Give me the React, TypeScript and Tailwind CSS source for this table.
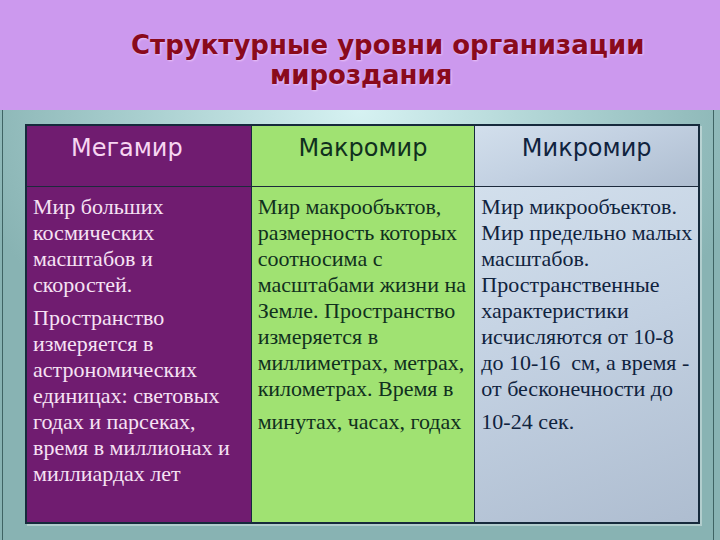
const columns = [
  {
    title: "Мегамир",
    cell: "bg-[#701c70] text-[#f6e2f4]",
    head: "text-[#f7d6f2] pr-6",
    paragraphs: [
      ["Мир больших", "космических", "масштабов и", "скоростей."],
      [
        "Пространство",
        "измеряется в",
        "астрономических",
        "единицах: световых",
        "годах и парсеках,",
        "время в миллионах и",
        "миллиардах лет",
      ],
    ],
  },
  {
    title: "Макромир",
    cell: "bg-[#a0e272] text-[#10301e]",
    head: "text-[#0f3028]",
    paragraphs: [
      [
        "Мир макрообъктов,",
        "размерность которых",
        "соотносима с",
        "масштабами жизни на",
        "Земле. Пространство",
        "измеряется в",
        "миллиметрах, метрах,",
        "километрах. Время в",
      ],
      ["минутах, часах, годах"],
    ],
  },
  {
    title: "Микромир",
    cell: "bg-[linear-gradient(160deg,#d2dfec_0%,#c3d1e2_45%,#aebdd0_100%)] text-[#10233e]",
    head: "text-[#10233e]",
    paragraphs: [
      [
        "Мир микрообъектов.",
        "Мир предельно малых",
        "масштабов.",
        "Пространственные",
        "характеристики",
        "исчисляются от 10-8",
        "до 10-16  см, а время -",
        "от бесконечности до",
      ],
      ["10-24 сек."],
    ],
  },
];

export default function App() {
  return (
    <div className="w-[720px] h-[540px] flex flex-col overflow-hidden">
      <header className="h-[110px] bg-[#cc99ee] pt-[30px] font-['DejaVu_Sans',sans-serif] font-bold text-[#8a0a1c] text-[26px] leading-[30px] [text-shadow:1px_1px_2px_rgba(255,220,255,0.6)]">
        <div className="pl-[131px] whitespace-nowrap">Структурные уровни организации</div>
        <div className="pl-[270px] whitespace-nowrap">мироздания</div>
      </header>
      <div className="flex-1 flex pl-[2px] pr-[6px] bg-[radial-gradient(ellipse_55%_70%_at_50%_0%,#d6f2f2_0%,#a9cfcf_55%,#88b3b3_100%)]">
        <div className="flex-1 border-x border-[#3f6464] pl-[22px] pr-[13px] pt-[14px] pb-[16px] flex">
          <div className="flex-1 grid grid-cols-3 grid-rows-[61px_1fr] border-2 border-[#162a3c] shadow-[2px_2px_0_rgba(255,255,255,0.35)]">
            {columns.map((c, i) => (
              <div
                key={c.title}
                className={`${c.cell} ${i > 0 ? "border-l border-[#162a3c]" : ""} border-b row-start-1 border-b-[#1c2a3c] pt-[6px] text-center font-['DejaVu_Sans',sans-serif] text-[24px] leading-[32px] ${c.head}`}
              >
                {c.title}
              </div>
            ))}
            {columns.map((c, i) => (
              <div
                key={c.title + "-body"}
                className={`${c.cell} ${i > 0 ? "border-l border-[#162a3c]" : ""} row-start-2 pl-[6px] pt-[7px] font-['Liberation_Serif',serif] text-[22px] leading-[26px] flex flex-col gap-[7px] overflow-hidden`}
              >
                {c.paragraphs.map((p, j) => (
                  <div key={j}>
                    {p.map((line) => (
                      <div key={line} className="whitespace-pre">
                        {line}
                      </div>
                    ))}
                  </div>
                ))}
              </div>
            ))}
          </div>
        </div>
      </div>
    </div>
  );
}
